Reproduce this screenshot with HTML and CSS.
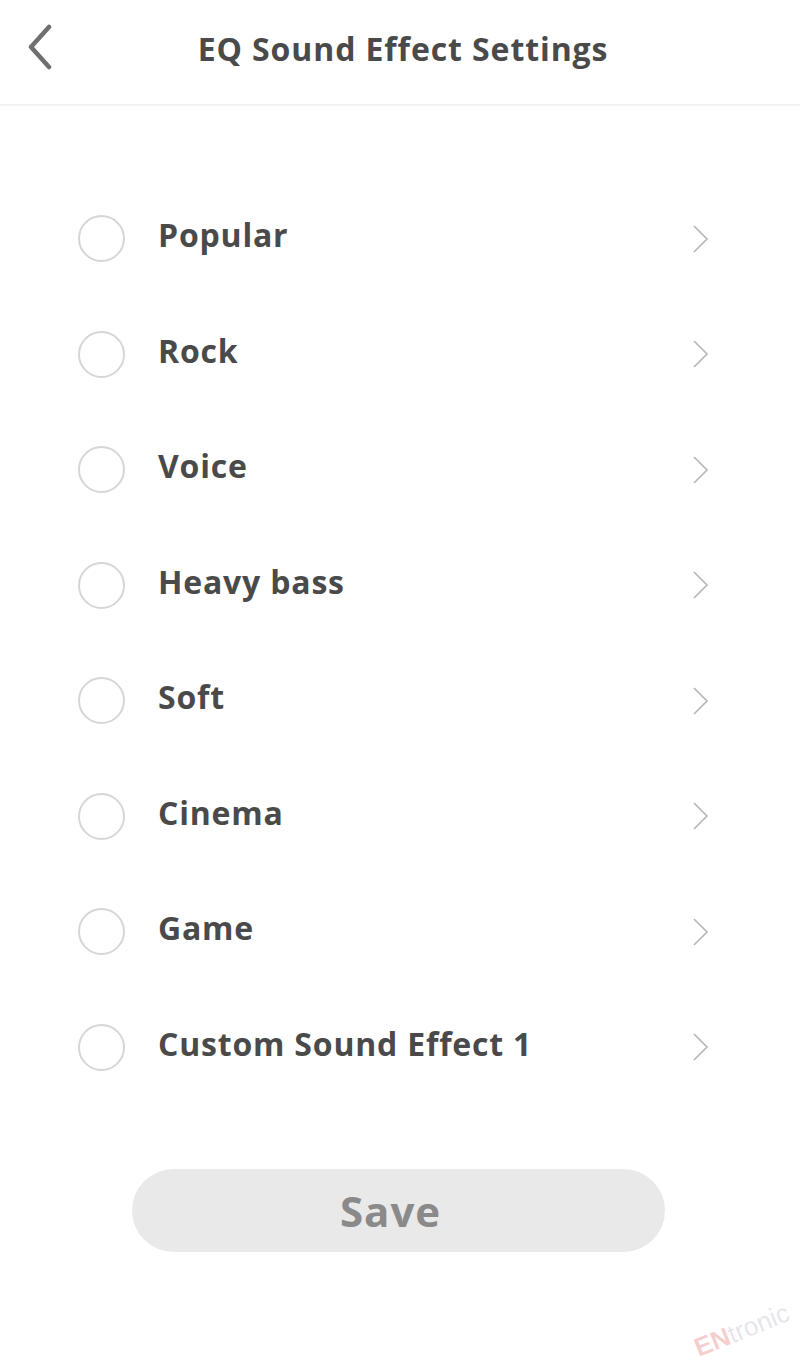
FILE: index.html
```html
<!DOCTYPE html>
<html>
<head>
<meta charset="utf-8">
<link rel="stylesheet" href="styles.css">
</head>
<body>
<div class="page">
  <header class="topbar">
    <svg class="back" width="30" height="46" viewBox="0 0 30 46"><path d="M24 3 L6 23 L24 43" fill="none" stroke="#6f6f6f" stroke-width="4.5" stroke-linecap="round" stroke-linejoin="round"/></svg>
    <h1 class="title">EQ Sound Effect Settings</h1>
  </header>
  <ul class="list">
    <li class="row"><span class="radio"></span><span class="label">Popular</span><svg class="chev" width="18" height="30" viewBox="0 0 18 30"><path d="M2 2 L15 15 L2 28" fill="none" stroke="#b5b5b5" stroke-width="1.6"/></svg></li>
    <li class="row"><span class="radio"></span><span class="label">Rock</span><svg class="chev" width="18" height="30" viewBox="0 0 18 30"><path d="M2 2 L15 15 L2 28" fill="none" stroke="#b5b5b5" stroke-width="1.6"/></svg></li>
    <li class="row"><span class="radio"></span><span class="label">Voice</span><svg class="chev" width="18" height="30" viewBox="0 0 18 30"><path d="M2 2 L15 15 L2 28" fill="none" stroke="#b5b5b5" stroke-width="1.6"/></svg></li>
    <li class="row"><span class="radio"></span><span class="label">Heavy bass</span><svg class="chev" width="18" height="30" viewBox="0 0 18 30"><path d="M2 2 L15 15 L2 28" fill="none" stroke="#b5b5b5" stroke-width="1.6"/></svg></li>
    <li class="row"><span class="radio"></span><span class="label">Soft</span><svg class="chev" width="18" height="30" viewBox="0 0 18 30"><path d="M2 2 L15 15 L2 28" fill="none" stroke="#b5b5b5" stroke-width="1.6"/></svg></li>
    <li class="row"><span class="radio"></span><span class="label">Cinema</span><svg class="chev" width="18" height="30" viewBox="0 0 18 30"><path d="M2 2 L15 15 L2 28" fill="none" stroke="#b5b5b5" stroke-width="1.6"/></svg></li>
    <li class="row"><span class="radio"></span><span class="label">Game</span><svg class="chev" width="18" height="30" viewBox="0 0 18 30"><path d="M2 2 L15 15 L2 28" fill="none" stroke="#b5b5b5" stroke-width="1.6"/></svg></li>
    <li class="row"><span class="radio"></span><span class="label">Custom Sound Effect 1</span><svg class="chev" width="18" height="30" viewBox="0 0 18 30"><path d="M2 2 L15 15 L2 28" fill="none" stroke="#b5b5b5" stroke-width="1.6"/></svg></li>
  </ul>
  <div class="actions">
    <button class="save">Save</button>
  </div>
  <div class="watermark"><span class="wm-en">EN</span>tronic</div>
</div>
</body>
</html>
```
FILE: styles.css
```css
html, body {
  margin: 0;
  padding: 0;
  background: #ffffff;
}
body {
  font-family: "Open Sans", "Liberation Sans", sans-serif;
  color: #4a4a4a;
}
.page {
  position: relative;
  width: 800px;
  height: 1364px;
  overflow: hidden;
}
.topbar {
  height: 104px;
  border-bottom: 2px solid #f2f2f2;
  display: flex;
  align-items: center;
  justify-content: center;
  position: relative;
}
.back {
  position: absolute;
  left: 25px;
  top: 24px;
}
.title {
  margin: 0;
  padding-left: 6px;
  font-size: 32px;
  font-weight: 700;
  letter-spacing: 0.9px;
  color: #4a4a4a;
  margin-top: -8px;
}
.list {
  list-style: none;
  margin: 0;
  padding: 75px 0 0 0;
}
.row {
  height: 115.5px;
  display: flex;
  align-items: center;
  padding-left: 78px;
  padding-right: 90px;
}
.radio {
  width: 43px;
  height: 43px;
  border: 2px solid #d6d6d6;
  border-radius: 50%;
  flex: none;
}
.label {
  margin-left: 33px;
  font-size: 32px;
  font-weight: 700;
  letter-spacing: 0.8px;
  flex: 1;
  margin-top: -8px;
}
.chev {
  flex: none;
}
.actions {
  display: flex;
  justify-content: center;
  padding-top: 64px;
}
.save {
  width: 533px;
  height: 83px;
  border: none;
  border-radius: 42px;
  background: #e9e9e9;
  color: #8a8a8a;
  font-family: "Open Sans", "Liberation Sans", sans-serif;
  font-size: 42px;
  font-weight: 700;
  letter-spacing: 1px;
  margin-left: -3px;
  padding: 0 16px 0 0;
}
.watermark {
  position: absolute;
  right: 8px;
  bottom: 18px;
  font-family: "Liberation Sans", sans-serif;
  font-size: 26px;
  color: rgba(180, 180, 200, 0.35);
  transform: rotate(-22deg);
}
.wm-en {
  color: rgba(220, 60, 60, 0.25);
  font-weight: 700;
}
```
